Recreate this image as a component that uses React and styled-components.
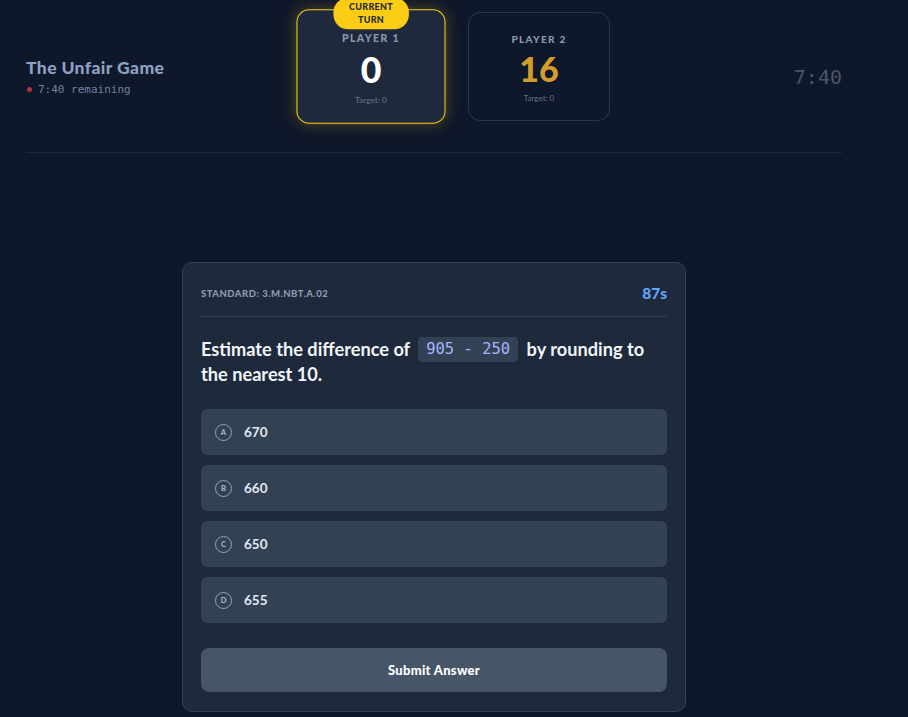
import React from 'react';
import styled, { createGlobalStyle, css } from 'styled-components';

const GlobalStyle = createGlobalStyle`
  html, body {
    margin: 0;
    padding: 0;
    background: #0f172a;
    font-family: Lato, "Noto Sans", sans-serif;
  }
`;

const Page = styled.div`
  min-height: 717px;
  background: #0f172a;
  overflow: hidden;
`;

const Header = styled.header`
  width: 816px;
  margin: 0 26px;
  display: grid;
  grid-template-columns: 274px auto 1fr;
  align-items: center;
  padding: 12px 0 31px;
  border-bottom: 1px solid #1e293b;
`;

const Brand = styled.div`
  margin-top: 20px;
`;

const Title = styled.h1`
  margin: 0;
  font-size: 17.5px;
  font-weight: 900;
  color: #8da1c3;
  letter-spacing: 0.4px;
`;

const Remaining = styled.div`
  display: flex;
  align-items: center;
  gap: 6px;
  margin-top: 5px;
  margin-left: 1px;
  font-family: "DejaVu Sans Mono", monospace;
  font-size: 11px;
  color: #6f819e;
`;

const Dot = styled.span`
  width: 5px;
  height: 5px;
  border-radius: 50%;
  background: #b3323b;
`;

const Players = styled.div`
  display: flex;
  gap: 26px;
`;

const PlayerCard = styled.div`
  position: relative;
  width: 142px;
  height: 109px;
  box-sizing: border-box;
  border-radius: 12px;
  border: 1px solid #2a3649;
  background: #0f172a;
  display: flex;
  flex-direction: column;
  align-items: center;
  padding-top: 20px;
  ${p => p.$active && css`
    background: #1e293b;
    border-color: #facc15;
    transform: scale(1.05);
    box-shadow: 0 0 14px rgba(250, 204, 21, 0.28);
  `}
`;

const TurnBadge = styled.div`
  position: absolute;
  top: -12px;
  left: 50%;
  transform: translateX(-50%);
  background: #facc15;
  color: #1e293b;
  font-size: 8.5px;
  font-weight: 900;
  letter-spacing: 0.3px;
  line-height: 12px;
  text-align: center;
  padding: 3px 15px;
  border-radius: 14px;
  white-space: nowrap;
`;

const PlayerLabel = styled.div`
  font-size: 10px;
  line-height: 12px;
  font-weight: 900;
  letter-spacing: 1.3px;
  color: #8c9ab0;
`;

const Score = styled.div`
  margin-top: 6px;
  font-size: 34px;
  line-height: 36px;
  font-weight: 900;
  color: ${p => p.$color};
`;

const Target = styled.div`
  margin-top: 6px;
  font-size: 8px;
  line-height: 10px;
  color: #64748b;
`;

const Clock = styled.div`
  margin-top: 20px;
  justify-self: end;
  font-family: "DejaVu Sans Mono", monospace;
  font-size: 20px;
  color: #475569;
`;

const Main = styled.main`
  width: 816px;
  margin: 0 26px;
  display: flex;
  justify-content: center;
  padding-top: 109px;
`;

const QuestionCard = styled.section`
  width: 504px;
  box-sizing: border-box;
  background: #1e293b;
  border: 1px solid #334155;
  border-radius: 10px;
  padding: 20px 18px 19px;
`;

const CardHead = styled.div`
  display: flex;
  justify-content: space-between;
  align-items: center;
  padding-bottom: 13px;
  border-bottom: 1px solid #334155;
`;

const Standard = styled.div`
  font-size: 9.5px;
  font-weight: 900;
  color: #8c9ab0;
  letter-spacing: 0.5px;
`;

const Seconds = styled.div`
  font-size: 15.5px;
  font-weight: 900;
  color: #60a5fa;
  line-height: 20px;
`;

const Question = styled.p`
  margin: 20px 0 0;
  font-size: 18.2px;
  line-height: 25px;
  font-weight: 700;
  color: #f1f5f9;
`;

const Code = styled.code`
  display: inline-block;
  vertical-align: top;
  font-family: "DejaVu Sans Mono", monospace;
  font-weight: 400;
  font-size: 15.5px;
  line-height: 17px;
  color: #a5b4fc;
  background: #334155;
  padding: 4px 8px;
  margin: 0 4px;
  border-radius: 4px;
`;

const Options = styled.div`
  display: flex;
  flex-direction: column;
  gap: 10px;
  margin-top: 22px;
`;

const Option = styled.div`
  height: 46px;
  display: flex;
  align-items: center;
  gap: 12px;
  padding: 0 14px;
  background: #334155;
  border-radius: 6px;
`;

const Letter = styled.span`
  width: 17px;
  height: 17px;
  box-sizing: border-box;
  border: 1px solid #94a3b8;
  border-radius: 50%;
  display: flex;
  align-items: center;
  justify-content: center;
  font-size: 7.5px;
  font-weight: 900;
  color: #a3b0c2;
`;

const OptionText = styled.span`
  font-size: 13.5px;
  font-weight: 700;
  color: #e2e8f0;
`;

const SubmitButton = styled.button`
  display: block;
  width: 100%;
  height: 44px;
  margin-top: 25px;
  border: none;
  border-radius: 8px;
  background: #475569;
  color: #ffffff;
  font-family: Lato, "Noto Sans", sans-serif;
  font-size: 13px;
  font-weight: 900;
  letter-spacing: 0.3px;
  cursor: pointer;
`;

const players = [
  { name: 'PLAYER 1', score: 0, target: 0, active: true, color: '#ffffff' },
  { name: 'PLAYER 2', score: 16, target: 0, active: false, color: '#d19e2a' },
];

const answers = [
  { key: 'A', value: '670' },
  { key: 'B', value: '660' },
  { key: 'C', value: '650' },
  { key: 'D', value: '655' },
];

export default function App() {
  return (
    <Page>
      <GlobalStyle />
      <Header>
        <Brand>
          <Title>The Unfair Game</Title>
          <Remaining>
            <Dot />
            7:40 remaining
          </Remaining>
        </Brand>
        <Players>
          {players.map(p => (
            <PlayerCard key={p.name} $active={p.active}>
              {p.active && <TurnBadge>CURRENT<br />TURN</TurnBadge>}
              <PlayerLabel>{p.name}</PlayerLabel>
              <Score $color={p.color}>{p.score}</Score>
              <Target>Target: {p.target}</Target>
            </PlayerCard>
          ))}
        </Players>
        <Clock>7:40</Clock>
      </Header>
      <Main>
        <QuestionCard>
          <CardHead>
            <Standard>STANDARD: 3.M.NBT.A.02</Standard>
            <Seconds>87s</Seconds>
          </CardHead>
          <Question>
            Estimate the difference of <Code>905 - 250</Code> by rounding to the nearest 10.
          </Question>
          <Options>
            {answers.map(a => (
              <Option key={a.key}>
                <Letter>{a.key}</Letter>
                <OptionText>{a.value}</OptionText>
              </Option>
            ))}
          </Options>
          <SubmitButton>Submit Answer</SubmitButton>
        </QuestionCard>
      </Main>
    </Page>
  );
}
